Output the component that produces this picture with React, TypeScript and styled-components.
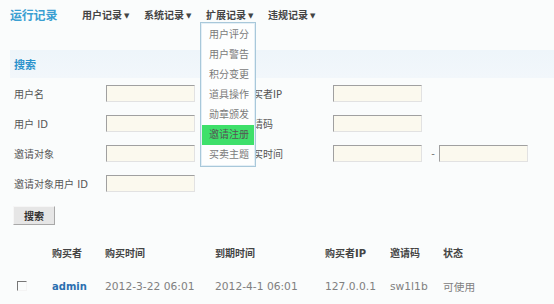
import React from "react";
import styled, { createGlobalStyle } from "styled-components";

const Global = createGlobalStyle`
  html, body { margin: 0; padding: 0; background: #fafcfc; }
  body {
    font-family: "DejaVu Sans", "Noto Sans CJK SC", sans-serif;
    width: 554px; height: 304px; overflow: hidden;
  }
`;

const Page = styled.div`
  position: relative;
  display: flex;
  flex-direction: column;
  width: 554px;
  height: 304px;
`;

const TopNav = styled.div`
  display: flex;
  align-items: center;
  height: 28px;
  padding-left: 10px;
`;

const Title = styled.div`
  font-size: 12px;
  font-weight: bold;
  color: #3a9fd2;
  width: 72px;
  letter-spacing: -0.2px;
`;

const NavItem = styled.div`
  position: relative;
  width: 62px;
  font-size: 10px;
  font-weight: bold;
  color: #444;
  white-space: nowrap;
`;

const Arrow = styled.span`
  font-size: 7px;
  margin-left: 2px;
  vertical-align: 1px;
`;

const Dropdown = styled.div`
  position: absolute;
  left: -6px;
  top: 15px;
  width: 54px;
  padding: 2px 0 1px;
  background: #fdfefe;
  border: 1px solid #a8c8da;
  box-shadow: inset 0 0 0 1px #e4eff6;
  display: flex;
  flex-direction: column;
  z-index: 5;
`;

const DropItem = styled.div<{ $active?: boolean }>`
  height: 20px;
  line-height: 20px;
  padding-left: 7px;
  font-size: 10px;
  font-weight: normal;
  color: ${(p) => (p.$active ? "#555" : "#7a7a7a")};
  background: ${(p) => (p.$active ? "#3ee06a" : "transparent")};
  margin: 0 1px;
`;

const Content = styled.div`
  display: flex;
  flex-direction: column;
  padding-top: 22px;
`;

const Band = styled.div`
  margin-left: 10px;
  height: 28px;
  display: flex;
  align-items: center;
  padding-left: 4px;
  background: linear-gradient(#eef5fa, #f2f7fb);
  font-size: 11px;
  font-weight: bold;
  color: #2b92cc;
`;

const Form = styled.div`
  display: grid;
  grid-template-columns: 92px 89px 48px 90px 89px 17px 89px;
  grid-auto-rows: 17px;
  row-gap: 13px;
  margin: 7px 0 0 14px;
  align-items: center;
`;

const Label = styled.div`
  font-size: 10px;
  color: #555;
  white-space: nowrap;
`;

const Input = styled.div`
  height: 17px;
  box-sizing: border-box;
  background: #fbf9ee;
  border-top: 1px solid #a0a0a0;
  border-left: 1px solid #a0a0a0;
  border-right: 1px solid #e2e2e2;
  border-bottom: 1px solid #e2e2e2;
`;

const Dash = styled.div`
  font-size: 10px;
  color: #777;
  text-align: center;
  padding-left: 5px;
`;

const Blank = styled.div``;

const Button = styled.div`
  align-self: flex-start;
  margin: 14px 0 0 13px;
  width: 42px;
  height: 19px;
  box-sizing: border-box;
  display: flex;
  align-items: center;
  justify-content: center;
  background: #e6e6e6;
  border-top: 1px solid #f6f6f6;
  border-left: 1px solid #f6f6f6;
  border-right: 1px solid #a8a8a8;
  border-bottom: 1px solid #a8a8a8;
  font-size: 10px;
  font-weight: bold;
  color: #333;
`;

const Table = styled.div`
  display: grid;
  grid-template-columns: 38px 53px 110px 110px 65px 53px 60px;
  grid-template-rows: 20px 24px;
  row-gap: 12px;
  margin: 17px 0 0 14px;
  align-items: center;
`;

const Th = styled.div`
  font-size: 10px;
  font-weight: bold;
  color: #444;
  white-space: nowrap;
`;

const Td = styled.div<{ $link?: boolean }>`
  font-size: ${(p) => (p.$link ? "10px" : "10.7px")};
  font-weight: ${(p) => (p.$link ? "bold" : "normal")};
  color: ${(p) => (p.$link ? "#2a6fb0" : "#808080")};
  white-space: nowrap;
`;

const Check = styled.div`
  width: 8px;
  height: 8px;
  margin-left: 3px;
  border-top: 1px solid #777;
  border-left: 1px solid #777;
  border-right: 1px solid #f4f4f4;
  border-bottom: 1px solid #f4f4f4;
`;

const menu = ["用户评分", "用户警告", "积分变更", "道具操作", "勋章颁发", "邀请注册", "买卖主题"];

export default function App() {
  return (
    <Page>
      <Global />
      <TopNav>
        <Title>运行记录</Title>
        <NavItem>用户记录<Arrow>▼</Arrow></NavItem>
        <NavItem>系统记录<Arrow>▼</Arrow></NavItem>
        <NavItem>
          扩展记录<Arrow>▼</Arrow>
          <Dropdown>
            {menu.map((m) => (
              <DropItem key={m} $active={m === "邀请注册"}>{m}</DropItem>
            ))}
          </Dropdown>
        </NavItem>
        <NavItem>违规记录<Arrow>▼</Arrow></NavItem>
      </TopNav>
      <Content>
        <Band>搜索</Band>
        <Form>
          <Label>用户名</Label>
          <Input />
          <Blank />
          <Label>购买者IP</Label>
          <Input />
          <Blank />
          <Blank />

          <Label>用户 ID</Label>
          <Input />
          <Blank />
          <Label>邀请码</Label>
          <Input />
          <Blank />
          <Blank />

          <Label>邀请对象</Label>
          <Input />
          <Blank />
          <Label>购买时间</Label>
          <Input />
          <Dash>-</Dash>
          <Input />

          <Label>邀请对象用户 ID</Label>
          <Input />
        </Form>
        <Button>搜索</Button>
        <Table>
          <Blank />
          <Th>购买者</Th>
          <Th>购买时间</Th>
          <Th>到期时间</Th>
          <Th>购买者IP</Th>
          <Th>邀请码</Th>
          <Th>状态</Th>

          <Check />
          <Td $link>admin</Td>
          <Td>2012-3-22 06:01</Td>
          <Td>2012-4-1 06:01</Td>
          <Td>127.0.0.1</Td>
          <Td>sw1l1b</Td>
          <Td>可使用</Td>
        </Table>
      </Content>
    </Page>
  );
}
